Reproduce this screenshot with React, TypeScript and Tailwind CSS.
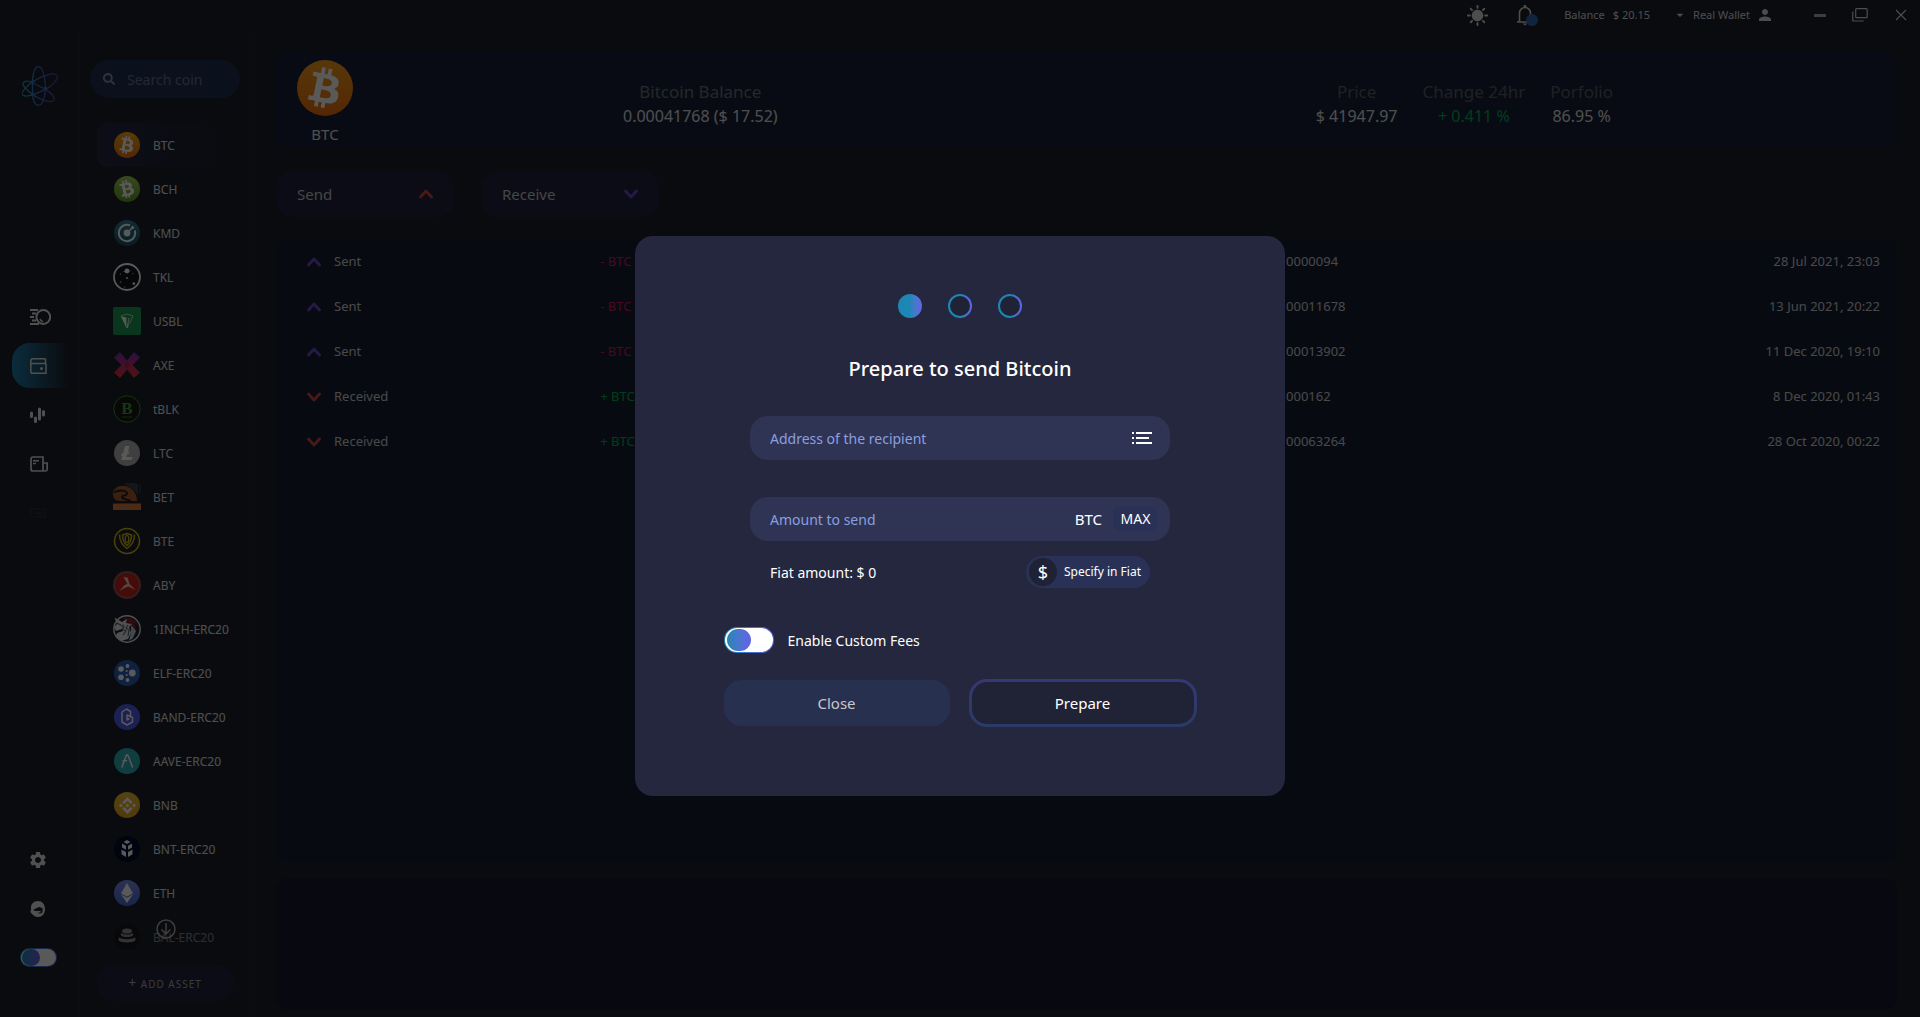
import React, { useState } from "react";
import { FaBtc, FaEthereum, FaSearch } from "react-icons/fa";
import { SiBinance } from "react-icons/si";
import {
  MdSettings,
  MdPerson,
  MdArrowDropDown,
  MdSunny,
} from "react-icons/md";

interface Coin {
  ticker: string;
  icon: React.ReactNode;
}

interface Transaction {
  type: "Sent" | "Received";
  fee: string;
  date: string;
}

const round = "flex size-[26px] items-center justify-center rounded-full";

const coins: Coin[] = [
  {
    ticker: "BTC",
    icon: (
      <span className={`${round} bg-linear-to-b from-[#f9aa1b] to-[#ee6f0c]`}>
        <FaBtc className="size-[18px] rotate-12 text-white" />
      </span>
    ),
  },
  {
    ticker: "BCH",
    icon: (
      <span className={`${round} bg-linear-to-b from-[#a5d15c] to-[#5e9a22]`}>
        <FaBtc className="size-[18px] -rotate-12 text-white" />
      </span>
    ),
  },
  {
    ticker: "KMD",
    icon: (
      <svg viewBox="0 0 26 26" className="size-[26px]">
        <defs>
          <linearGradient id="kmd" x1="0" y1="0" x2="0" y2="1">
            <stop offset="0" stopColor="#347f94" />
            <stop offset="1" stopColor="#18506c" />
          </linearGradient>
        </defs>
        <circle cx="13" cy="13" r="13" fill="url(#kmd)" />
        <path
          d="M16 5.400A8.200 8.200 0 1 0 20.800 10.500"
          fill="none"
          stroke="#fff"
          strokeWidth="1.900"
        />
        <circle cx="13" cy="13" r="3.400" fill="#fff" />
        <path d="M14 12l4-4" stroke="#fff" strokeWidth="1.400" />
        <circle cx="18.600" cy="7.400" r="1.500" fill="#fff" />
      </svg>
    ),
  },
  {
    ticker: "TKL",
    icon: (
      <svg viewBox="0 0 28 28" className="size-7">
        <circle cx="14" cy="14" r="13" fill="#10151c" stroke="#fff" strokeWidth="1.800" />
        <circle cx="14" cy="8" r="2.400" fill="#fff" />
        <path d="M10.500 8.400c2 1 6 .6 7-.8" fill="none" stroke="#fff" strokeWidth=".8" />
        <circle cx="14" cy="15" r=".9" fill="#fff" />
        <circle cx="20.800" cy="20.600" r="1.300" fill="#fff" />
        <circle cx="7.500" cy="11" r=".6" fill="#fff" />
        <circle cx="7.500" cy="19" r=".8" fill="#ccc" />
        <circle cx="20" cy="10.500" r=".5" fill="#fff" />
        <circle cx="11.800" cy="24" r=".6" fill="#fff" />
      </svg>
    ),
  },
  {
    ticker: "USBL",
    icon: (
      <svg viewBox="0 0 28 28" className="size-7">
        <rect width="28" height="28" rx="2" fill="#1f9c55" />
        <path d="M8 9l6-2 6 2-6 12z" fill="none" stroke="#fff" strokeWidth=".7" />
        <path d="M8.400 9.600l5 1v10z" fill="#fff" />
        <path d="M14 21l2-10" stroke="#fff" strokeWidth=".8" />
      </svg>
    ),
  },
  {
    ticker: "AXE",
    icon: (
      <svg viewBox="0 0 28 28" className="size-7">
        <defs>
          <linearGradient id="axe" x1="0" y1="0" x2="0" y2="1">
            <stop offset="0" stopColor="#7030c8" />
            <stop offset=".5" stopColor="#c43070" />
            <stop offset="1" stopColor="#e0352e" />
          </linearGradient>
        </defs>
        <path
          d="M7 1l7 8.500L21 1l6 5.500-7.500 7.500L27 21.500 21 27l-7-8.500L7 27l-6-5.500L8.500 14 1 6.500z"
          fill="url(#axe)"
        />
        <path d="M14 9.500l-3 4 3 5 3-5z" fill="#8a1c50" opacity=".5" />
      </svg>
    ),
  },
  {
    ticker: "tBLK",
    icon: (
      <svg viewBox="0 0 28 28" className="size-7">
        <circle cx="14" cy="14" r="13.200" fill="#141a14" stroke="#3f8f35" strokeWidth="1" />
        <text
          x="14"
          y="19"
          textAnchor="middle"
          fontFamily="Liberation Serif, serif"
          fontWeight="bold"
          fontSize="17"
          fill="#489a3c"
        >
          B
        </text>
        <path d="M9 22h10" stroke="#3f8f35" strokeWidth="1" strokeDasharray="1.500 .6" />
      </svg>
    ),
  },
  {
    ticker: "LTC",
    icon: (
      <svg viewBox="0 0 26 26" className="size-[26px]">
        <circle cx="13" cy="13" r="13" fill="#b5b5b5" />
        <path d="M11 6h4.500l-1.700 6.200 1.800-.6-.6 2-1.800.6-.8 2.800h6l-.8 3H7.200l1.300-4.600-1.600.5.6-2 1.600-.6z" fill="#fff" />
      </svg>
    ),
  },
  {
    ticker: "BET",
    icon: (
      <svg viewBox="0 0 28 28" className="size-7">
        <path d="M0 11C0 5 6 2 12 3c7 1 12 7 12 15H7C2 18 0 15 0 11z" fill="#a85c2c" />
        <path d="M1 9.500c5-3 13-2.500 13 1 0 3-6 1.500-5 4 1 2 6 2 9 3.500" fill="none" stroke="#1c1f2e" strokeWidth="1.800" />
        <path d="M10 1c5-2 14-1 15 0v11C22 7 17 3 10 1z" fill="#3c404c" />
        <path d="M27 1v9" stroke="#3c404c" strokeWidth="1.200" />
        <rect y="20.500" width="28" height="6.500" fill="#e07a2e" />
        <text x="14" y="26" textAnchor="middle" fontSize="6" fontWeight="bold" fontFamily="Noto Sans, sans-serif" fill="#a89078">
          BET
        </text>
      </svg>
    ),
  },
  {
    ticker: "BTE",
    icon: (
      <svg viewBox="0 0 28 28" className="size-7" fill="none" stroke="#d6bd14">
        <circle cx="14" cy="14" r="12.500" strokeWidth="1.500" />
        <path d="M6.500 7.500c0 6 3 11 7.500 14 4.500-3 7.500-8 7.500-14" strokeWidth="1.400" />
        <path d="M9.500 8c0 5 2 8.500 4.500 10.500C16.500 16.500 18.500 13 18.500 8l-4.500-1.500z" strokeWidth="1.500" />
        <ellipse cx="14" cy="12" rx="1.800" ry="3.500" strokeWidth="1.200" />
      </svg>
    ),
  },
  {
    ticker: "ABY",
    icon: (
      <svg viewBox="0 0 28 28" className="size-7">
        <circle cx="14" cy="14" r="14" fill="#a8484c" />
        <circle cx="14" cy="14" r="11" fill="#cf2014" stroke="#8a2a2e" strokeWidth=".8" />
        <path d="M10.500 6l4 .5 2 6.500 6 6-7-3.500-3 1-6 3.500 5-6 3-1z" fill="#e8d0cc" />
      </svg>
    ),
  },
  {
    ticker: "1INCH-ERC20",
    icon: (
      <svg viewBox="0 0 28 28" className="size-7">
        <circle cx="14" cy="14" r="13.200" fill="#20242e" stroke="#e8e8ea" strokeWidth="1.400" />
        <path d="M10 3.500c6-3 13 1 15 7l-4-3c2 4 2 7 1 9l-3-7z" fill="#8a2030" />
        <path d="M1.500 2.500L9 7l5-3-1 4 6 1-3 3 2 6-3 6-7 2-5-5 1-3 6-2-1-2-6 2-2-4 3-3z" fill="#e8e8ea" />
        <path d="M4 8l7 4-2 2 4 2-3 4M15 10l-2 3 3 2-1 6M19 12l3 4-2 5" fill="none" stroke="#59657c" strokeWidth="1.200" />
        <circle cx="10.500" cy="9.800" r=".9" fill="#c9a01c" />
        <path d="M18 10l5 6-3 7-4 3 2-8z" fill="#c9ccd4" />
      </svg>
    ),
  },
  {
    ticker: "ELF-ERC20",
    icon: (
      <svg viewBox="0 0 26 26" className="size-[26px]">
        <circle cx="13" cy="13" r="13" fill="#2b5ebb" />
        <g fill="#fff">
          <circle cx="18.300" cy="13" r="3.400" />
          <circle cx="7" cy="9" r="2.800" />
          <circle cx="7" cy="17.300" r="2.800" />
          <circle cx="13.500" cy="6" r="1.900" />
          <circle cx="13.500" cy="20" r="1.900" />
          <circle cx="12.700" cy="11" r="1" />
          <circle cx="12.700" cy="15" r="1" />
        </g>
      </svg>
    ),
  },
  {
    ticker: "BAND-ERC20",
    icon: (
      <svg viewBox="0 0 26 26" className="size-[26px]">
        <circle cx="13" cy="13" r="13" fill="#4f5ff0" />
        <path
          d="M16.500 12V7.500L12.500 5 8 8v10l5 3 5.500-3v-4.500L13 11v5l2.500-1.500"
          fill="none"
          stroke="#fff"
          strokeWidth="1.500"
          strokeLinejoin="round"
        />
      </svg>
    ),
  },
  {
    ticker: "AAVE-ERC20",
    icon: (
      <svg viewBox="0 0 26 26" className="size-[26px]">
        <circle cx="13" cy="13" r="13" fill="#2eaeb6" />
        <path
          d="M8 19l4.200-11.500c.3-.9 1.500-.9 1.800 0L18.500 19M9 12.800h3.500"
          fill="none"
          stroke="#fff"
          strokeWidth="1.500"
          strokeLinecap="round"
        />
      </svg>
    ),
  },
  {
    ticker: "BNB",
    icon: (
      <span className={`${round} bg-linear-to-b from-[#f0c030] to-[#eda41f]`}>
        <SiBinance className="size-[17px] text-white" />
      </span>
    ),
  },
  {
    ticker: "BNT-ERC20",
    icon: (
      <svg viewBox="0 0 26 26" className="size-[26px]">
        <circle cx="13" cy="13" r="13" fill="#000d2b" />
        <path d="M13 4l3.500 2L13 8 9.500 6zM8 7.500l4 2.300v4L8 11.500zM18 7.500l-4 2.300v4l4-2.300zM7.500 13.500l4.500 2.500v5l-4.500-2.700zM18.500 13.500L14 16v5l4.500-2.700z" fill="#fff" />
      </svg>
    ),
  },
  {
    ticker: "ETH",
    icon: (
      <span className={`${round} bg-linear-to-b from-[#7b93f0] to-[#4d66d6]`}>
        <FaEthereum className="size-5 text-white" />
      </span>
    ),
  },
  {
    ticker: "BAL-ERC20",
    icon: (
      <svg viewBox="0 0 26 26" className="size-[26px]">
        <circle cx="13" cy="13" r="13" fill="#111214" />
        <g fill="#fff">
          <ellipse cx="13" cy="7" rx="5" ry="2.600" />
          <path d="M7.500 9c1.500 2 9.500 2 11 0 1.500 1.500 1 4-5.500 4s-7-2.500-5.500-4z" />
          <path d="M5.500 13.500c2 2.200 13 2.200 15 0 2.500 2 1 5-7.500 5s-10-3-7.500-5z" />
        </g>
      </svg>
    ),
  },
];

const transactions: Transaction[] = [
  { type: "Sent", fee: "0000094", date: "28 Jul 2021, 23:03" },
  { type: "Sent", fee: "00011678", date: "13 Jun 2021, 20:22" },
  { type: "Sent", fee: "00013902", date: "11 Dec 2020, 19:10" },
  { type: "Received", fee: "000162", date: "8 Dec 2020, 01:43" },
  { type: "Received", fee: "00063264", date: "28 Oct 2020, 00:22" },
];

const Chevron = ({ up, className }: { up?: boolean; className: string }) => (
  <svg viewBox="0 0 14 10" className={`h-[10px] w-[14px] ${className}`}>
    <path
      d={up ? "M1.500 8L7 2l5.500 6" : "M1.500 2L7 8l5.500-6"}
      fill="none"
      stroke="currentColor"
      strokeWidth="2.800"
      strokeLinecap="round"
      strokeLinejoin="round"
    />
  </svg>
);

const Logo = () => (
  <svg viewBox="0 0 36 40" className="h-10 w-9" fill="none" strokeWidth="1.300">
    <defs>
      <linearGradient id="logo" gradientUnits="userSpaceOnUse" x1="0" y1="0" x2="36" y2="0">
        <stop offset="0" stopColor="#1f9aa8" />
        <stop offset=".45" stopColor="#3a72c4" />
        <stop offset="1" stopColor="#5b3bb5" />
      </linearGradient>
    </defs>
    <g stroke="url(#logo)">
      <path d="M10.500 15C11 7 13 .7 16.500 .7S22.500 8 23.500 21" />
      <path d="M10.500 28c.5 6 2.500 11.300 6 11.300S22.500 33 23.500 23" />
      <path d="M10.500 16C20 9 33 6 35 9.500S30 20 24 23 9 31 3 30 .5 24 10 16" />
      <path d="M10.500 28C4 24 0 19 1 17s5-2.500 9-.5l13 6.500c7 4 10 9 9 11-2 4-13 0-21-5" />
      <path d="M10.500 16v13" />
    </g>
    <g fill="#3a72c4">
      <circle cx="10.500" cy="16" r="1.800" />
      <circle cx="10.500" cy="28.500" r="1.800" />
      <circle cx="23.500" cy="22.500" r="1.800" />
    </g>
  </svg>
);

const PortfolioIcon = () => (
  <svg viewBox="0 0 21 16" className="h-4 w-[21px]" fill="none" stroke="currentColor">
    <circle cx="13.300" cy="8" r="6.900" strokeWidth="2" />
    <path d="M0 1h8M2 4.500h4M0 8h4M2 11.500h4M0 15h9" strokeWidth="1.800" />
    <path d="M10 10a4 4 0 0 0 3 2.600" strokeWidth="1.600" />
  </svg>
);

const WalletIcon = () => (
  <svg viewBox="0 0 17 16" className="h-4 w-[17px]" fill="none" stroke="currentColor">
    <path d="M16 5.500v9.700H2.600A1.800 1.800 0 0 1 .8 13.400V3" strokeWidth="1.500" />
    <path d="M.8 3A2.200 2.200 0 0 1 3 .8h12.500M15.500 .8V5M.8 5.500H16" strokeWidth="1.500" />
    <circle cx="11.500" cy="10.600" r="1.500" fill="currentColor" stroke="none" />
  </svg>
);

const DexIcon = () => (
  <svg viewBox="0 0 15 16" className="h-4 w-[15px]" stroke="currentColor" strokeWidth="3" strokeLinecap="round">
    <path d="M1.500 6v3.500M5.500 11v3.500M9.500 2v10M13.500 4.500V8" />
  </svg>
);

const NewsIcon = () => (
  <svg viewBox="0 0 18 16" className="h-4 w-[18px]" fill="none" stroke="currentColor" strokeWidth="1.700">
    <path d="M13 15V1H3A2 2 0 0 0 1 3v10a2 2 0 0 0 2 2h12.500a1.700 1.700 0 0 0 1.700-1.700V7H13" />
    <path d="M3 4.700h6M3 7.500h3" strokeWidth="1.400" />
  </svg>
);

const FiatIcon = () => (
  <svg viewBox="0 0 16 10" className="h-[10px] w-4 opacity-5" fill="none" stroke="currentColor" strokeWidth="1.600">
    <rect x="1" y="1" width="14" height="8" />
    <path d="M4 5h8" strokeWidth="3" />
  </svg>
);

const SupportIcon = () => (
  <svg viewBox="0 0 16 16" className="size-4">
    <path
      d="M8 0C3.500 0 1 3 1 6.500c0 1 .3 1.500-.3 3S1 12 2 13c1.500 1.500 3 3 6 3 4 0 7-3 7-8S12 0 8 0zm4.500 7v3.500c0 1-.8 2-2 2H8.500v-1h2V10H4.700L3.500 8.500 9 6z"
      fill="currentColor"
    />
  </svg>
);

const navItems = [
  { label: "Portfolio", icon: <PortfolioIcon /> },
  { label: "Wallet", icon: <WalletIcon />, active: true },
  { label: "DEX", icon: <DexIcon /> },
  { label: "News", icon: <NewsIcon /> },
  { label: "Fiat", icon: <FiatIcon /> },
];

const switchBase =
  "relative shrink-0 appearance-none rounded-full border border-transparent [background:linear-gradient(#fff,#fff)_padding-box,linear-gradient(90deg,#1c86b4,#6461e8)_border-box] before:absolute before:rounded-full before:bg-linear-to-r before:from-[#1c86b4] before:to-[#6461e8]";

const ring =
  "size-6 rounded-full border-2 border-transparent [background:linear-gradient(#202236,#202236)_padding-box,linear-gradient(90deg,#1c86b4_50%,#6461e8)_border-box]";

const TitleBar = () => (
  <header className="flex h-[30px] shrink-0 items-start justify-end pr-[13px] text-[11px] leading-[30px] text-[#dcdcdc]">
    <button aria-label="Theme" className="mt-1 mr-[27px]">
      <MdSunny className="size-[23px]" />
    </button>
    <button aria-label="Notifications" className="relative mt-1 mr-[26px]">
      <svg viewBox="0 0 22 22" className="size-[22px]" fill="none" stroke="currentColor" strokeWidth="1.600">
        <path d="M1 18h16M3.500 17.500V9a5.500 5.500 0 0 1 11 0v8.500" />
        <path d="M9 1v3" strokeWidth="2.500" />
        <path d="M6.500 19.500h5L9 21.500z" fill="currentColor" stroke="none" />
      </svg>
      <span className="absolute right-0 bottom-0 size-3 rounded-full bg-[#2f67b8]" />
    </button>
    <span className="mr-2">Balance</span>
    <span className="mr-[22px]">$ 20.15</span>
    <button className="mr-10 flex items-center">
      <MdArrowDropDown className="mr-[5px] size-4" />
      Real Wallet
      <MdPerson className="ml-[6px] size-[18px]" />
    </button>
    <button aria-label="Minimize" className="mt-[14px] mr-[26px] h-[3px] w-3 bg-[#b0b0b0]" />
    <button aria-label="Restore" className="mt-2 mr-[27px]">
      <svg viewBox="0 0 16 14" className="h-[14px] w-4" fill="none" stroke="currentColor" strokeWidth="1.200">
        <rect x="3.700" y=".7" width="11.500" height="9" rx="1" />
        <path d="M.8 3.500V13h11" />
      </svg>
    </button>
    <button aria-label="Close window" className="mt-[9px]">
      <svg viewBox="0 0 12 12" className="size-3" stroke="currentColor" strokeWidth="1.100">
        <path d="M1 1l10 10M11 1L1 11" />
      </svg>
    </button>
  </header>
);

const NavRail = () => (
  <nav className="flex w-20 shrink-0 flex-col border-r border-[#23252f] pt-9 pb-[35px] text-[#e4e4e4]">
    <a href="#" aria-label="Home" className="ml-[22px]">
      <Logo />
    </a>
    <div className="mt-[186px] flex flex-col">
      {navItems.map((item) => (
        <a
          key={item.label}
          href="#"
          aria-label={item.label}
          className={`my-[2px] ml-3 flex h-[45px] w-[58px] items-center pl-[18px] ${
            item.active
              ? "rounded-l-[18px] bg-linear-to-r from-[#1f7fae] to-transparent"
              : ""
          }`}
        >
          {item.icon}
        </a>
      ))}
    </div>
    <div className="mt-auto flex flex-col">
      <button aria-label="Settings" className="flex h-[49px] items-center pl-7">
        <MdSettings className="size-5" />
      </button>
      <button aria-label="Support" className="flex h-[49px] items-center pl-[30px]">
        <SupportIcon />
      </button>
      <div className="flex h-[49px] items-center pl-5">
        <input
          type="checkbox"
          aria-label="Privacy mode"
          className={`${switchBase} h-[19px] w-[37px] before:top-0 before:left-px before:h-[17px] before:w-[18px]`}
        />
      </div>
    </div>
  </nav>
);

const CoinSidebar = () => {
  const [selected, setSelected] = useState("BTC");

  return (
    <aside className="flex w-[175px] shrink-0 flex-col border-r border-[#23252f] pt-[30px] pb-4">
      <div className="mr-[14px] ml-[10px] flex h-[38px] items-center rounded-full bg-[#222f54] pl-[13px]">
        <FaSearch className="size-3 shrink-0 text-[#8890ac]" />
        <input
          aria-label="Search coin"
          placeholder="Search coin"
          className="ml-3 w-0 flex-1 bg-transparent pt-[2px] text-sm text-white outline-none placeholder:text-[#68708e]"
        />
      </div>
      <div className="relative mt-[25px] min-h-0 flex-1 overflow-hidden">
        {coins.map((coin) => (
          <button
            key={coin.ticker}
            onClick={() => setSelected(coin.ticker)}
            className={`ml-[17px] flex h-11 w-[140px] items-center gap-3 rounded-l-[10px] text-left text-xs text-[#e0e0e0] ${
              coin.ticker === selected ? "bg-linear-to-r from-[#252845] to-transparent" : ""
            } ${coin.ticker === "BAL-ERC20" ? "opacity-50" : ""}`}
          >
            <span className="ml-4 flex w-7 shrink-0 justify-center">{coin.icon}</span>
            <span className="pt-[2px]">{coin.ticker}</span>
          </button>
        ))}
        <svg
          viewBox="0 0 20 20"
          className="absolute bottom-[11px] left-[76px] size-5 text-[#b0b0b0]"
          fill="none"
          stroke="currentColor"
          strokeWidth="1.500"
        >
          <circle cx="10" cy="10" r="9" />
          <path d="M10 4v11M5.500 10.500L10 15l4.500-4.500" />
        </svg>
      </div>
      <button className="mt-[15px] mr-5 ml-4 h-9 rounded-full bg-[#20243e] text-[10px] tracking-widest text-[#a8a8ac]">
        <span className="text-sm">+</span> ADD ASSET
      </button>
    </aside>
  );
};

const WalletPage = () => (
  <main className="flex min-w-0 flex-1 flex-col pt-[21px] pr-[23px] pb-[7px] pl-[21px]">
    <section className="flex h-[97px] items-center rounded-xl bg-[#192138] text-base text-[#e0e0e0]">
      <div className="ml-[21px] flex flex-col items-center gap-2 pt-1">
        <span className="flex size-14 items-center justify-center rounded-full bg-linear-to-b from-[#f9a01b] to-[#ee6f0c]">
          <FaBtc className="size-10 rotate-12 text-white" />
        </span>
        <span className="text-[15px] leading-5">BTC</span>
      </div>
      <div className="ml-[270px] pt-2 text-center leading-6">
        <p className="text-[17px] text-[#6d7078]">Bitcoin Balance</p>
        <p>0.00041768 ($ 17.52)</p>
      </div>
      <dl className="mr-[284px] ml-auto flex gap-[25px] pt-2 text-center leading-[25px]">
        <div>
          <dt className="text-[17px] text-[#5c5f68]">Price</dt>
          <dd>$ 41947.97</dd>
        </div>
        <div>
          <dt className="text-[17px] text-[#5c5f68]">Change 24hr</dt>
          <dd className="text-[#00b050]">+ 0.411 %</dd>
        </div>
        <div>
          <dt className="text-[17px] text-[#5c5f68]">Porfolio</dt>
          <dd>86.95 %</dd>
        </div>
      </dl>
    </section>

    <div className="mt-[23px] flex gap-[27px] text-[15px] text-[#c8c8c8]">
      <button className="flex h-[46px] w-[178px] items-center justify-between rounded-2xl bg-[#20243e] px-[21px]">
        Send
        <Chevron up className="text-[#d04840]" />
      </button>
      <button className="flex h-[46px] w-[178px] items-center justify-between rounded-2xl bg-[#20243e] px-[21px]">
        Receive
        <Chevron className="text-[#6c4cc8]" />
      </button>
    </div>

    <section className="mt-[22px] min-h-0 flex-1 rounded-xl bg-[#171f33]">
      <table className="w-full table-fixed text-[13px] text-[#d0d0d0]">
        <colgroup>
          <col className="w-[20%]" />
          <col />
          <col className="w-[19%]" />
          <col className="w-[19%]" />
        </colgroup>
        <tbody>
          {transactions.map((tx) => (
            <tr key={tx.date} className="h-[45px]">
              <td className="pl-[31px]">
                <span className="flex items-center gap-[13px]">
                  <Chevron
                    up={tx.type === "Sent"}
                    className={tx.type === "Sent" ? "text-[#6c4cc8]" : "text-[#d04840]"}
                  />
                  {tx.type}
                </span>
              </td>
              <td className={tx.type === "Sent" ? "text-[#d0185a]" : "text-[#00b050]"}>
                {tx.type === "Sent" ? "- BTC" : "+ BTC"}
              </td>
              <td className="pl-[5px]">{tx.fee}</td>
              <td className="pr-[17px] text-right">{tx.date}</td>
            </tr>
          ))}
        </tbody>
      </table>
    </section>

    <section className="mt-4 h-[132px] shrink-0 rounded-xl bg-[#191b2f]" />
  </main>
);

const SendModal = () => {
  const [address, setAddress] = useState("");
  const [amount, setAmount] = useState("");
  const [customFees, setCustomFees] = useState(false);

  return (
    <div className="fixed inset-0 flex items-center justify-center bg-black/65 pt-[15px]">
      <form
        role="dialog"
        aria-labelledby="send-title"
        onSubmit={(e) => e.preventDefault()}
        className="flex w-[650px] flex-col items-center rounded-[18px] bg-[#25273e] pt-[58px] pb-[69px] text-white"
      >
        <div className="flex gap-[26px]">
          <span className="size-6 rounded-full bg-linear-to-r from-[#1c86b4] from-50% to-[#6461e8]" />
          <span className={ring} />
          <span className={ring} />
        </div>
        <h2 id="send-title" className="mt-9 text-xl leading-[30px] font-medium">
          Prepare to send Bitcoin
        </h2>

        <div className="mt-8 flex h-11 w-[420px] items-center rounded-[18px] bg-[#303454] pr-[18px] pl-5">
          <input
            aria-label="Address of the recipient"
            placeholder="Address of the recipient"
            value={address}
            onChange={(e) => setAddress(e.target.value)}
            className="min-w-0 flex-1 bg-transparent pt-[2px] text-sm outline-none placeholder:text-[#8a9fe0]"
          />
          <button type="button" aria-label="Address book">
            <svg viewBox="0 0 20 12" className="h-3 w-5" stroke="currentColor" strokeWidth="2">
              <path d="M0 1h2M0 6h2M0 11h2M4 1h16M4 6h13M4 11h16" />
            </svg>
          </button>
        </div>

        <div className="mt-[37px] flex h-11 w-[420px] items-center rounded-[18px] bg-[#303454] pr-3 pl-5">
          <input
            aria-label="Amount to send"
            placeholder="Amount to send"
            value={amount}
            onChange={(e) => setAmount(e.target.value)}
            className="min-w-0 flex-1 bg-transparent pt-[2px] text-sm outline-none placeholder:text-[#8a9fe0]"
          />
          <span className="text-[15px]">BTC</span>
          <button
            type="button"
            className="ml-[11px] h-6 w-[45px] rounded-md bg-[#2a3156] text-sm"
          >
            MAX
          </button>
        </div>

        <div className="mt-[15px] flex w-[380px] items-center justify-between text-sm">
          <span className="pt-[2px]">Fiat amount: $ 0</span>
          <button
            type="button"
            className="flex h-8 w-[124px] items-center rounded-full bg-[#293256] pl-[3px] text-xs"
          >
            <span className="mr-[7px] flex size-7 items-center justify-center rounded-full bg-[#1f2135] text-lg">
              $
            </span>
            Specify in Fiat
          </button>
        </div>

        <div className="mt-[39px] flex w-[473px] items-center gap-[14px] text-sm">
          <input
            id="custom-fees"
            type="checkbox"
            checked={customFees}
            onChange={(e) => setCustomFees(e.target.checked)}
            className={`${switchBase} h-[26px] w-[50px] before:top-px before:left-[2px] before:h-[22px] before:w-6`}
          />
          <label htmlFor="custom-fees" className="pt-[2px]">
            Enable Custom Fees
          </label>
        </div>

        <div className="mt-[26px] flex w-[473px] items-center justify-between text-[15px]">
          <button
            type="button"
            className="h-[46px] w-[226px] rounded-[18px] bg-[#28304f] text-[#c8c8cc]"
          >
            Close
          </button>
          <button
            type="submit"
            className="h-12 w-[228px] rounded-[18px] border-3 border-transparent [background:linear-gradient(#202236,#202236)_padding-box,linear-gradient(#343973,#2b3a66)_border-box]"
          >
            Prepare
          </button>
        </div>
      </form>
    </div>
  );
};

export default function App() {
  return (
    <div className="flex h-screen flex-col bg-[#1e2029] font-['Noto_Sans','Open_Sans',sans-serif]">
      <TitleBar />
      <div className="flex min-h-0 flex-1">
        <NavRail />
        <CoinSidebar />
        <WalletPage />
      </div>
      <SendModal />
    </div>
  );
}
